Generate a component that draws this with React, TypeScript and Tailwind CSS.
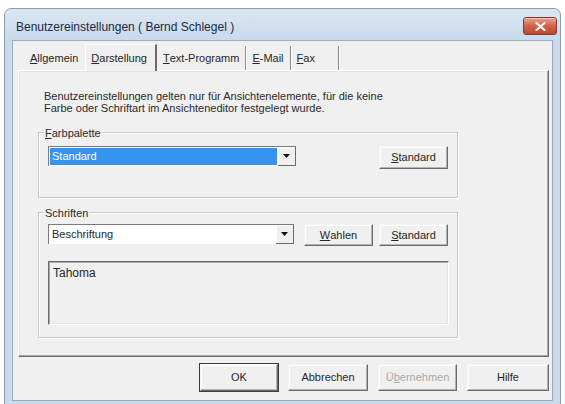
import type { ReactNode } from "react"

function U({ children }: { children: ReactNode }) {
  return <span className="underline underline-offset-1">{children}</span>
}

function Btn({ children, className = "", disabled = false, def = false }: { children: ReactNode; className?: string; disabled?: boolean; def?: boolean }) {
  return (
    <div
      className={`flex items-center justify-center bg-[#f0f0f0] border border-t-[#f4f4f4] border-l-[#f4f4f4] border-r-[#6a6a6a] border-b-[#6a6a6a] shadow-[inset_-1px_-1px_0_#b4b4b4,inset_1px_1px_0_#ffffff] ${
        def ? "outline outline-1 outline-[#3c3c3c]" : ""
      } ${disabled ? "text-[#a8a8a8]" : "text-[#262626]"} ${className}`}
    >
      {children}
    </div>
  )
}

function Arrow() {
  return (
    <div className="w-[18px] h-full flex items-center justify-center bg-[#f0f0f0] border-r border-b border-[#6a6a6a] shadow-[inset_1px_1px_0_#ffffff]">
      <svg width="7" height="4" viewBox="0 0 7 4">
        <path d="M0 0h7L3.5 4z" fill="#111" />
      </svg>
    </div>
  )
}

function Group({ label, className = "", children }: { label: ReactNode; className?: string; children: ReactNode }) {
  return (
    <div className={`relative ml-[19px] w-[420px] border border-[#c9c9c9] shadow-[inset_1px_1px_0_#ffffff,1px_1px_0_#ffffff] ${className}`}>
      <div className="absolute -top-[6px] left-[5px] px-[1px] bg-[#f0f0f0] leading-[13px] text-[#2a2a2a]">{label}</div>
      {children}
    </div>
  )
}

export default function App() {
  return (
    <div className="w-[565px] h-[404px] bg-white pt-[8px] px-[4px] overflow-hidden font-['Liberation_Sans',Arial,sans-serif] text-[11px]">
      <div className="h-[400px] flex flex-col rounded-t-[7px] bg-[#c9daec] border border-[#8c9fb4]">
        {/* Title bar */}
        <div className="h-[31px] flex items-start justify-between bg-gradient-to-b from-[#dbe6f2] to-[#c9daec] rounded-t-[7px] pl-[11px] pr-[3px]">
          <div className="mt-[11px] text-[12px] text-[#1c2a44] leading-[15px]">Benutzereinstellungen ( Bernd Schlegel )</div>
          <div className="mt-[8px] w-[34px] h-[18px] rounded-[3px] border border-[#7a3a30] bg-gradient-to-b from-[#e6a393] via-[#d0624b] to-[#c5442d] flex items-center justify-center shadow-[inset_0_1px_0_#f3c4b8]">
            <svg width="11" height="9" viewBox="0 0 11 9">
              <path d="M1.5 1l8 7M9.5 1l-8 7" stroke="#fff" strokeWidth="2.2" strokeLinecap="round" />
            </svg>
          </div>
        </div>

        {/* Client area */}
        <div className="flex-1 mx-[7px] mb-[6px] bg-[#f0f0f0] border border-[#9aacbf] flex flex-col pl-[5px] pr-[3px]">
          {/* Tab strip */}
          <div className="h-[29px] flex items-end pl-[5px] text-[#262626]">
            <div className="h-[24px] flex items-center px-[7px]">
              <U>A</U>llgemein
            </div>
            <div className="h-[27px] relative top-[1px] flex items-center pl-[5px] pr-[8px] bg-[#f0f0f0] border-l border-t border-white border-r-2 border-r-[#6a6a6a]">
              <U>D</U>arstellung
            </div>
            <div className="h-[24px] flex items-center px-[6px] border-r border-[#8a8a8a] shadow-[1px_0_0_#ffffff]">
              <U>T</U>ext-Programm
            </div>
            <div className="h-[24px] flex items-center px-[6px] border-r border-[#8a8a8a] shadow-[1px_0_0_#ffffff]">
              <U>E</U>-Mail
            </div>
            <div className="h-[24px] w-[48px] flex items-center px-[6px] border-r border-[#8a8a8a] shadow-[1px_0_0_#ffffff]">
              <U>F</U>ax
            </div>
          </div>

          {/* Tab page */}
          <div className="h-[287px] border border-t-white border-l-white border-r-[#6a6a6a] border-b-[#6a6a6a] shadow-[inset_-1px_-1px_0_#a8a8a8,inset_1px_1px_0_#e4e4e4] flex flex-col">
            <div className="mt-[19px] ml-[25px] leading-[12px] text-[#2a2a2a]">
              Benutzereinstellungen gelten nur für Ansichtenelemente, für die keine
              <br />
              Farbe oder Schriftart im Ansichteneditor festgelegt wurde.
            </div>

            <Group label={<><U>F</U>arbpalette</>} className="mt-[18px] h-[66px]">
              <div className="flex items-start mt-[13px] ml-[9px] mr-[9px]">
                <div className="w-[248px] h-[20px] flex bg-white border-t border-l border-[#7a7a7a]">
                  <div className="flex-1 m-[1px] bg-[#3694f0] text-white leading-[16px] pl-[2px]">Standard</div>
                  <Arrow />
                </div>
                <Btn className="ml-auto w-[69px] h-[23px]">
                  <U>S</U>tandard
                </Btn>
              </div>
            </Group>

            <Group label="Schriften" className="mt-[14px] h-[126px]">
              <div className="flex items-start mt-[11px] ml-[9px] mr-[9px]">
                <div className="w-[246px] h-[20px] flex bg-white border-t border-l border-[#7a7a7a]">
                  <div className="flex-1 text-[#262626] leading-[18px] pl-[3px]">Beschriftung</div>
                  <Arrow />
                </div>
                <Btn className="ml-[10px] w-[69px] h-[22px]">
                  <U>W</U>ahlen
                </Btn>
                <Btn className="ml-auto w-[69px] h-[22px]">
                  <U>S</U>tandard
                </Btn>
              </div>
              <div className="mt-[15px] ml-[9px] w-[401px] h-[64px] border border-t-[#6a6a6a] border-l-[#6a6a6a] border-r-white border-b-white shadow-[inset_1px_1px_0_#a8a8a8,inset_-1px_-1px_0_#e4e4e4] px-[4px] pt-[4px] text-[12px] text-[#262626] leading-[14px]">
                Tahoma
              </div>
            </Group>
          </div>

          {/* Buttons */}
          <div className="flex justify-end gap-[10px] mt-[7px]">
            <Btn def className="w-[78px] h-[27px]">OK</Btn>
            <Btn className="w-[80px] h-[27px]">Abbrechen</Btn>
            <Btn disabled className="w-[79px] h-[27px]">
              Ü<U>b</U>ernehmen
            </Btn>
            <Btn className="w-[82px] h-[27px]">Hilfe</Btn>
          </div>
        </div>
      </div>
    </div>
  )
}
